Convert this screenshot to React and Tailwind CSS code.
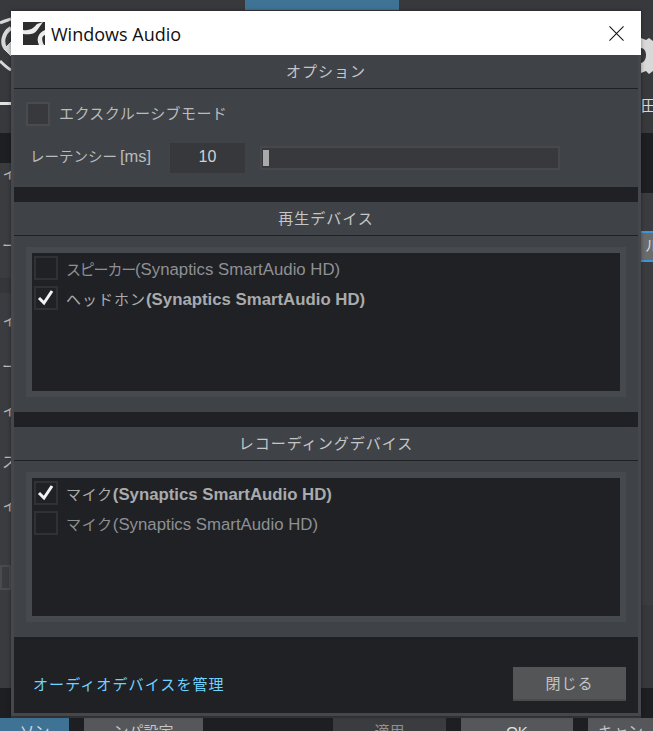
import React from 'react';

const FONT = '"Liberation Sans", "Noto Sans CJK JP", sans-serif';

// what shows of the main window to the left of the dialog
const leftBands = [
  { h: 'h-[102px]', bg: 'bg-[#38393d]', text: '' },
  { h: 'h-[3px]', bg: 'bg-[#e2e2e2]', text: '' },
  { h: 'h-[28px]', bg: 'bg-[#38393d]', text: '' },
  { h: 'h-[30px]', bg: 'bg-[#1e1f23]', text: '' },
  { h: 'h-[20px]', bg: 'bg-[#3b3c40]', text: 'ィア' },
  { h: 'h-[47px]', bg: 'bg-[#3b3c40]', text: '' },
  { h: 'h-[32px]', bg: 'bg-[#3b3c40]', text: 'ーン' },
  { h: 'h-[16px]', bg: 'bg-[#3b3c40]', text: '' },
  { h: 'h-[15px]', bg: 'bg-[#35363a]', text: '' },
  { h: 'h-[12px]', bg: 'bg-[#3b3c40]', text: '' },
  { h: 'h-[30px]', bg: 'bg-[#3b3c40]', text: 'ィア' },
  { h: 'h-[17px]', bg: 'bg-[#3b3c40]', text: '' },
  { h: 'h-[30px]', bg: 'bg-[#3b3c40]', text: 'ーン' },
  { h: 'h-[13px]', bg: 'bg-[#3b3c40]', text: '' },
  { h: 'h-[30px]', bg: 'bg-[#3b3c40]', text: 'ィン' },
  { h: 'h-[22px]', bg: 'bg-[#3b3c40]', text: '' },
  { h: 'h-[30px]', bg: 'bg-[#3b3c40]', text: 'スン' },
  { h: 'h-[13px]', bg: 'bg-[#3b3c40]', text: '' },
  { h: 'h-[30px]', bg: 'bg-[#3b3c40]', text: 'ィン' },
  { h: 'h-[45px]', bg: 'bg-[#3b3c40]', text: '' },
];

const GearLeft = () => (
  <svg viewBox="0 0 11 60" className="absolute left-0 top-[17px] h-[60px] w-[11px]" fill="none" stroke="#d8d8d8">
    <path d="M0 6 C4 4 8 3 11 2" strokeWidth="3" />
    <path d="M11 11 C3 16 1 26 6 32" strokeWidth="4" />
    <path d="M4 32 L11 25 L11 39 Z" fill="#d8d8d8" strokeWidth="1" />
    <path d="M0 44 C4 48 7 51 11 53" strokeWidth="3" />
  </svg>
);

const GearRight = () => (
  <svg viewBox="0 0 12 36" className="absolute left-[641px] top-[38px] h-[36px] w-[12px]" fill="#d8d8d8">
    <path d="M0 0 L5 2 L8 0 L12 3 L12 33 L8 36 L5 33 L0 35 L0 25 C4 24 5 20 5 17 C5 13 3 10 0 10 Z" />
  </svg>
);

const CheckBox = ({ checked }) => (
  <div className="flex h-6 w-6 shrink-0 items-center justify-center border-2 border-[#2f3235] bg-[#1f2125]">
    {checked && (
      <svg viewBox="0 0 20 20" className="h-5 w-5" fill="none" stroke="#f2f2f2" strokeWidth="3">
        <path d="M3 10 L8 15 L16 3" />
      </svg>
    )}
  </div>
);

const DeviceRow = ({ name, device, active, nameClass }) => (
  <div className="flex h-[30px] items-center pl-0.5">
    <CheckBox checked={active} />
    <span className={`ml-[8px] whitespace-nowrap pt-[4px] text-[16.8px] ${active ? 'font-bold text-[#a9abad]' : 'text-[#8e9094]'}`}>
      <span className={`text-[15px] font-normal ${nameClass}`}>{name}</span>
      {device}
    </span>
  </div>
);

const SectionHeader = ({ children }) => (
  <div className="flex h-[34px] items-center justify-center border-b border-[#1f2125] pt-[2px] text-[15px] tracking-[1px] text-[#c4c6c8]">
    {children}
  </div>
);

const DeviceSection = ({ title, rows }) => (
  <section className="h-[210px] bg-[#3f4246]">
    <SectionHeader>{title}</SectionHeader>
    <div className="mx-3 mt-[11px] h-[150px] bg-[#46494d] p-1.5">
      <div className="h-[138px] bg-[#1f2125]">
        {rows.map((row) => (
          <DeviceRow key={row.name + row.active} {...row} />
        ))}
      </div>
    </div>
  </section>
);

const App = () => {
  return (
    <div className="relative h-[731px] w-[653px] overflow-hidden bg-[#38393d]" style={{ fontFamily: FONT }}>
      {/* main window behind the dialog */}
      <div className="flex h-[718px] justify-between">
        <div className="w-[11px]">
          {leftBands.map((band, i) => (
            <div key={i} className={`flex items-center whitespace-nowrap pl-[2px] text-[15px] text-[#b9bbbd] ${band.h} ${band.bg}`}>
              {band.text}
            </div>
          ))}
          <div className="h-[25px] border-2 border-[#4a4b4f] bg-[#3a3b3f]" />
          <div className="h-[98px] bg-[#3a3b3f]" />
          <div className="h-[30px] bg-[#1e1f23]" />
        </div>
        <div className="w-[12px] overflow-hidden">
          <div className="flex h-[133px] items-end justify-start bg-[#38393d] pb-[20px] text-[15px] leading-none text-[#d8d8d8]">田</div>
          <div className="h-[60px] bg-[#1e1f23]" />
          <div className="h-[38px] bg-[#3b3c40]" />
          <div className="flex h-[31px] items-center border-y-2 border-[#3f95d8] bg-[#6a6b6d] pl-[4px] text-[15px] text-[#d8d8d8]">ル</div>
          <div className="h-[343px] bg-[#3b3c40]" />
          <div className="h-[83px] bg-[#37383c]" />
          <div className="h-[30px] bg-[#1e1f23]" />
        </div>
      </div>
      <div className="flex h-[13px] bg-[#1e1f23] text-[15px] leading-[28px]">
        <div className="w-[69px] overflow-hidden bg-[#3f7396] text-center text-[#d8d8d8]">ソン</div>
        <div className="ml-[15px] w-[119px] overflow-hidden bg-[#56575a] text-center text-[#c4c6c8]">ンパ設定</div>
        <div className="ml-[130px] w-[113px] overflow-hidden bg-[#3b3c3f] text-center text-[#8e9094]">適用</div>
        <div className="ml-[15px] w-[112px] overflow-hidden bg-[#56575a] text-center text-[#e2e2e2]">OK</div>
        <div className="ml-[15px] w-[65px] overflow-hidden bg-[#56575a] text-center text-[#c4c6c8]">キャン</div>
      </div>
      <div className="absolute left-[245px] top-0 h-[10px] w-[154px] bg-[#3f7396]" />
      <GearLeft />
      <GearRight />

      {/* dialog */}
      <div className="absolute left-[11px] top-[11px] w-[630px] shadow-[0_0_4px_rgba(0,0,0,0.4)]">
        <header className="flex h-[44px] items-center bg-white pl-3 pr-[17px]">
          <svg viewBox="0 0 22 23" className="h-[23px] w-[22px]">
            <rect width="22" height="23" fill="#2e2e2e" />
            <path d="M0 8 C6 9 10 7 14 2 L20 0 L15 7 C12 12 7 13 0 12 Z" fill="#ececec" />
            <path d="M22 8 L22 13 C19 14 18 17 21 23 L16 23 C13 17 15 11 22 8 Z" fill="#ececec" />
          </svg>
          <span className="ml-[6px] pt-[2px] text-[18px] text-[#101010]" style={{ fontFamily: '"Open Sans", sans-serif' }}>
            Windows Audio
          </span>
          <svg viewBox="0 0 16 16" className="ml-auto h-[15px] w-[15px]" fill="none" stroke="#111" strokeWidth="1.1">
            <path d="M0.5 0.5 L15.5 15.5 M15.5 0.5 L0.5 15.5" />
          </svg>
        </header>

        <div className="border-x-[3px] border-b-[3px] border-[#45474b]">
          <section className="h-[132px] bg-[#3f4246]">
            <SectionHeader>オプション</SectionHeader>
            <div className="mt-[13px] flex h-[24px] items-center pl-3">
              <div className="h-6 w-6 border-2 border-[#494b4f] bg-[#38393d]" />
              <span className="ml-[9px] text-[15px] tracking-[0.4px] text-[#b9bbbd]">エクスクルーシブモード</span>
            </div>
            <div className="mt-[17px] flex h-[30px] items-center pl-[16px]">
              <span className="w-[140px] whitespace-nowrap pb-[4px] text-[14.5px] text-[#b9bbbd]">
                レーテンシー<span className="ml-[3px] text-[16.5px]">[ms]</span>
              </span>
              <div className="flex h-[30px] w-[75px] items-center justify-center bg-[#36383b] pb-[2px] text-[16px] text-[#d0d2d4]">10</div>
              <div className="ml-[15px] flex h-6 w-[300px] items-center border-2 border-[#46484c] bg-[#38393d] pl-[1px]">
                <div className="h-4 w-[6px] bg-[#aaaaaa]" />
              </div>
            </div>
          </section>
          <div className="h-[15px] bg-[#1f2125]" />
          <DeviceSection
            title="再生デバイス"
            rows={[
              { name: 'スピーカー', device: '(Synaptics SmartAudio HD)', active: false, nameClass: 'tracking-[-1.2px]' },
              { name: 'ヘッドホン', device: '(Synaptics SmartAudio HD)', active: true, nameClass: 'tracking-[1px]' },
            ]}
          />
          <div className="h-[15px] bg-[#1f2125]" />
          <DeviceSection
            title="レコーディングデバイス"
            rows={[
              { name: 'マイク', device: '(Synaptics SmartAudio HD)', active: true, nameClass: 'tracking-[0.7px]' },
              { name: 'マイク', device: '(Synaptics SmartAudio HD)', active: false, nameClass: 'tracking-[0.7px]' },
            ]}
          />
          <footer className="flex h-[76px] items-end justify-between bg-[#1f2125] pb-3 pl-[19px] pr-3">
            <a className="text-[15px] leading-[32px] tracking-[1.1px] text-[#6fd3ff]">オーディオデバイスを管理</a>
            <button className="h-[34px] w-[113px] border-b-2 border-[#4a4b4d] bg-[#545557] pt-[2px] text-[15px] tracking-[1px] text-[#c4c6c8]">閉じる</button>
          </footer>
        </div>
      </div>
    </div>
  );
};

export default App;
